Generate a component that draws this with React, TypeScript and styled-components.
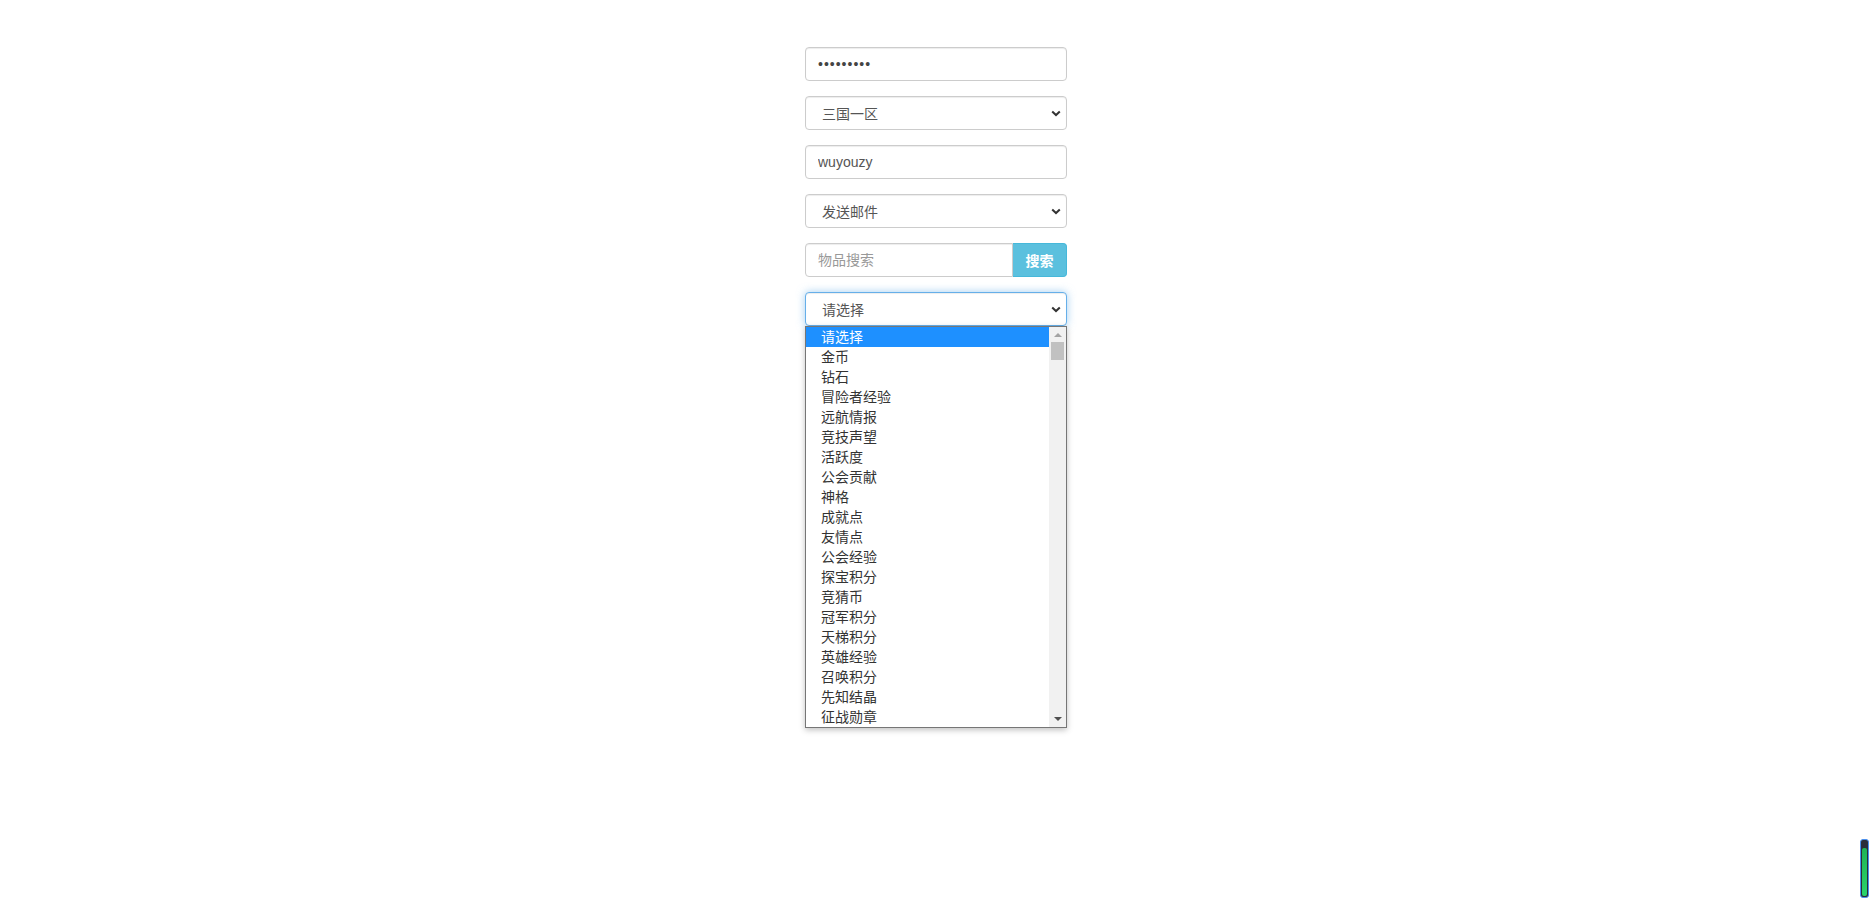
import React from 'react';
import styled, { createGlobalStyle } from 'styled-components';

const currencies = [
  '请选择',
  '金币',
  '钻石',
  '冒险者经验',
  '远航情报',
  '竞技声望',
  '活跃度',
  '公会贡献',
  '神格',
  '成就点',
  '友情点',
  '公会经验',
  '探宝积分',
  '竞猜币',
  '冠军积分',
  '天梯积分',
  '英雄经验',
  '召唤积分',
  '先知结晶',
  '征战勋章',
];

const GlobalStyle = createGlobalStyle`
  html, body {
    margin: 0;
    padding: 0;
    height: 100%;
    background: #fff;
  }

  #root {
    min-height: 100%;
  }

  body {
    font-family: "Liberation Sans", "Noto Sans CJK SC", sans-serif;
    font-size: 14px;
    color: #333;
  }

  * {
    box-sizing: border-box;
  }
`;

const Page = styled.main`
  width: 262px;
  min-height: 100vh;
  margin: 0 auto;
  padding-top: 47px;
`;

const FormGroup = styled.div`
  position: relative;
  margin-bottom: 15px;
`;

const Input = styled.input`
  display: block;
  width: 100%;
  height: 34px;
  padding: 6px 12px;
  font-family: inherit;
  font-size: 14px;
  color: #555;
  background: #fff;
  border: 1px solid #ccc;
  border-radius: 4px;
  box-shadow: inset 0 1px 1px rgba(0, 0, 0, 0.075);
  outline: none;

  &::placeholder {
    color: #999;
  }
`;

const PasswordInput = styled(Input)`
  letter-spacing: 1px;
  color: #444;
`;

const SelectBox = styled.div<{ $focused?: boolean }>`
  display: flex;
  align-items: center;
  height: 34px;
  padding: 0 12px 0 16px;
  font-size: 14px;
  color: #555;
  background: #fff;
  border: 1px solid ${(p) => (p.$focused ? '#66afe9' : '#ccc')};
  border-radius: 4px;
  box-shadow: ${(p) =>
    p.$focused
      ? 'inset 0 1px 1px rgba(0,0,0,.075), 0 0 8px rgba(102,175,233,.6)'
      : 'inset 0 1px 1px rgba(0,0,0,.075)'};
`;

const SelectLabel = styled.span`
  flex: 1;
`;

const Chevron = () => (
  <svg width="10" height="7" viewBox="0 0 10 7" style={{ marginRight: -7 }}>
    <path d="M1.2 1.5l3.8 3.6 3.8-3.6" fill="none" stroke="#333" strokeWidth="2" />
  </svg>
);

const InputGroup = styled.div`
  display: flex;
  height: 34px;

  & > input {
    flex: 1;
    min-width: 0;
    border-top-right-radius: 0;
    border-bottom-right-radius: 0;
  }
`;

const InfoButton = styled.button`
  flex: 0 0 54px;
  height: 34px;
  padding: 0;
  font-family: inherit;
  font-size: 14px;
  font-weight: 700;
  color: #fff;
  background: #5bc0de;
  border: 1px solid #46b8da;
  border-left: 0;
  border-radius: 0 4px 4px 0;
  cursor: pointer;
`;

const Dropdown = styled.div`
  position: absolute;
  top: 34px;
  left: 0;
  right: 0;
  display: flex;
  background: #fff;
  border: 1px solid #767676;
  box-shadow: 0 2px 6px rgba(0, 0, 0, 0.25);
  z-index: 10;
`;

const OptionList = styled.ul`
  flex: 1;
  margin: 0;
  padding: 0;
  list-style: none;
`;

const Option = styled.li<{ $active?: boolean }>`
  height: 20px;
  line-height: 20px;
  padding-left: 15px;
  font-size: 14px;
  color: ${(p) => (p.$active ? '#fff' : '#333')};
  background: ${(p) => (p.$active ? '#1e90ff' : 'transparent')};
`;

const Scrollbar = styled.div`
  display: flex;
  flex-direction: column;
  align-items: center;
  width: 17px;
  padding: 6px 0;
  background: #f1f1f1;
`;

const Thumb = styled.div`
  width: 13px;
  height: 18px;
  margin-top: 5px;
  background: #c1c1c1;
`;

const Spacer = styled.div`
  flex: 1;
`;

const Arrow = ({ up, color }: { up?: boolean; color: string }) => (
  <svg width="8" height="4" viewBox="0 0 8 4">
    <path d={up ? 'M0 4L4 0L8 4Z' : 'M0 0L8 0L4 4Z'} fill={color} />
  </svg>
);

const Meter = styled.div`
  position: fixed;
  right: 3px;
  bottom: 4px;
  display: flex;
  flex-direction: column;
  width: 9px;
  height: 59px;
  padding: 1px;
  border: 1px solid #4a90f0;
  border-radius: 3px;
  background: #2a2d3a;
`;

const MeterFill = styled.div`
  flex: 1;
  margin-top: 7px;
  border-radius: 2px;
  background: linear-gradient(#1fb356, #2bd46a);
`;

export default function App() {
  return (
    <>
      <GlobalStyle />
      <Page>
        <FormGroup>
          <PasswordInput type="password" defaultValue="123456789" />
        </FormGroup>
        <FormGroup>
          <SelectBox>
            <SelectLabel>三国一区</SelectLabel>
            <Chevron />
          </SelectBox>
        </FormGroup>
        <FormGroup>
          <Input type="text" defaultValue="wuyouzy" />
        </FormGroup>
        <FormGroup>
          <SelectBox>
            <SelectLabel>发送邮件</SelectLabel>
            <Chevron />
          </SelectBox>
        </FormGroup>
        <FormGroup>
          <InputGroup>
            <Input type="text" placeholder="物品搜索" />
            <InfoButton>搜索</InfoButton>
          </InputGroup>
        </FormGroup>
        <FormGroup>
          <SelectBox $focused>
            <SelectLabel>请选择</SelectLabel>
            <Chevron />
          </SelectBox>
          <Dropdown>
            <OptionList>
              {currencies.map((name, i) => (
                <Option key={name} $active={i === 0}>
                  {name}
                </Option>
              ))}
            </OptionList>
            <Scrollbar>
              <Arrow up color="#a3a3a3" />
              <Thumb />
              <Spacer />
              <Arrow color="#505050" />
            </Scrollbar>
          </Dropdown>
        </FormGroup>
      </Page>
      <Meter>
        <MeterFill />
      </Meter>
    </>
  );
}
